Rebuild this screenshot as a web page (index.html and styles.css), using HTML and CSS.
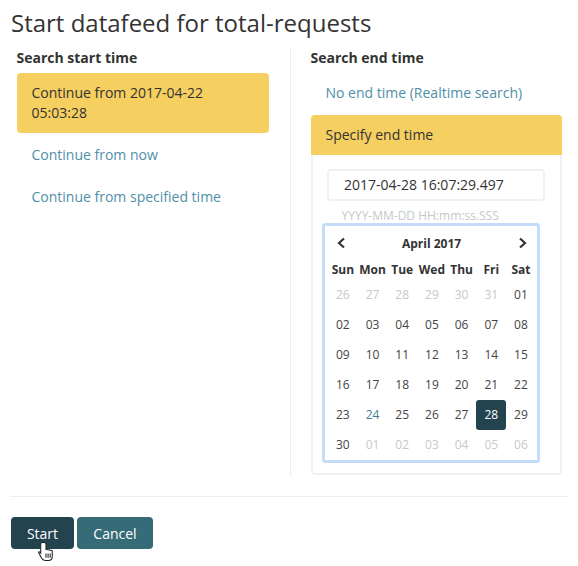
FILE: index.html
```html
<!DOCTYPE html>
<html lang="en">
<head>
  <meta charset="UTF-8">
  <title>Start datafeed</title>
  <link rel="stylesheet" href="styles.css">
</head>
<body>
  <h1>Start datafeed for total-requests</h1>
  <div class="columns">
    <div class="col col-start">
      <h2>Search start time</h2>
      <div class="option selected">Continue from 2017-04-22 05:03:28</div>
      <a class="option">Continue from now</a>
      <a class="option">Continue from specified time</a>
    </div>
    <div class="col col-end">
      <h2>Search end time</h2>
      <a class="option">No end time (Realtime search)</a>
      <div class="panel">
        <div class="panel-head">Specify end time</div>
        <div class="panel-body">
          <div class="time-input">2017-04-28 16:07:29.497</div>
          <div class="format">YYYY-MM-DD HH:mm:ss.SSS</div>
          <div class="calendar">
            <div class="cal-head">
              <svg class="chev" width="10" height="12" viewBox="0 0 10 12"><path d="M8 1.500 3 6l5 4.500" /></svg>
              <span>April 2017</span>
              <svg class="chev" width="10" height="12" viewBox="0 0 10 12"><path d="M2 1.500 7 6l-5 4.500" /></svg>
            </div>
            <div class="cal-grid">
              <div class="dow">Sun</div><div class="dow">Mon</div><div class="dow">Tue</div><div class="dow">Wed</div><div class="dow">Thu</div><div class="dow">Fri</div><div class="dow">Sat</div>
              <div class="day muted">26</div><div class="day muted">27</div><div class="day muted">28</div><div class="day muted">29</div><div class="day muted">30</div><div class="day muted">31</div><div class="day">01</div>
              <div class="day">02</div><div class="day">03</div><div class="day">04</div><div class="day">05</div><div class="day">06</div><div class="day">07</div><div class="day">08</div>
              <div class="day">09</div><div class="day">10</div><div class="day">11</div><div class="day">12</div><div class="day">13</div><div class="day">14</div><div class="day">15</div>
              <div class="day">16</div><div class="day">17</div><div class="day">18</div><div class="day">19</div><div class="day">20</div><div class="day">21</div><div class="day">22</div>
              <div class="day">23</div><div class="day today">24</div><div class="day">25</div><div class="day">26</div><div class="day">27</div><div class="day active">28</div><div class="day">29</div>
              <div class="day">30</div><div class="day muted">01</div><div class="day muted">02</div><div class="day muted">03</div><div class="day muted">04</div><div class="day muted">05</div><div class="day muted">06</div>
            </div>
          </div>
        </div>
      </div>
    </div>
  </div>
  <div class="footer">
    <button class="btn btn-start">Start</button>
    <button class="btn btn-cancel">Cancel</button>
    <svg class="cursor" width="17" height="21" viewBox="0 0 16 20"><path d="M4 1.500c-.9 0-1.500.6-1.500 1.500v8.500L1.800 10.600C1 9.800.3 10.200.6 11.300l2.600 5c.8 1.500 1.800 2.200 3.600 2.200h3.200c2.200 0 3.500-1.500 3.500-3.700V10c0-1.500-1.700-1.600-2-.6 0-1.300-1.700-1.500-2-.5 0-1.300-1.700-1.400-2-.4V3c0-.9-.6-1.500-1.500-1.500Z" fill="#fff" stroke="#222" stroke-width="1"/><path d="M7.500 12v4M9.500 12v4M11.500 12v4" stroke="#222" stroke-width="1"/></svg>
  </div>
</body>
</html>
```

FILE: styles.css
```css
* {
  box-sizing: border-box;
}

body {
  font-family: "Open Sans", sans-serif;
  color: #333;
  background: #fff;
  margin: 0;
  padding: 0 10px;
  min-height: 566px;
}

h1 {
  font-size: 24px;
  font-weight: 400;
  line-height: 33px;
  margin: 6px 0 0 1px;
}

.columns {
  display: flex;
  margin-top: 9px;
}

.col {
  width: 281px;
  padding: 0 6.500px;
}

.col-start {
  height: 428px;
  border-right: 1px solid #eceff1;
}

.col-end {
  padding: 0 0 0 19.500px;
  width: 272px;
}

h2 {
  font-size: 14px;
  font-weight: 700;
  line-height: 20px;
  margin: 0 0 5px;
}

.option {
  display: block;
  color: #4f8fa8;
  font-size: 14px;
  line-height: 20px;
  padding: 10px 15px;
  margin-bottom: 2px;
}

.selected {
  background: #f5cf60;
  color: #333;
  border-radius: 4px;
  width: 252px;
}

.panel {
  margin-top: 2px;
  width: 251.500px;
  border: 2px solid #eff2f3;
  border-top: 0;
  border-radius: 4px;
}

.panel-head {
  background: #f5cf60;
  font-size: 14px;
  line-height: 20px;
  padding: 10px 15px;
  margin: 0 -2px;
  border-radius: 4px 4px 0 0;
}

.panel-body {
  padding: 14px 9px 10px;
}

.time-input {
  width: 218px;
  height: 32px;
  margin-left: 5.500px;
  border: 2px solid #eff2f3;
  border-radius: 4px;
  padding: 0 15px;
  font-size: 14px;
  line-height: 28px;
}

.format {
  font-size: 12px;
  line-height: 16px;
  color: #c4c9cc;
  margin: 7px 0 0 20px;
}

.calendar {
  width: 218px;
  height: 240px;
  margin-top: -1px;
  border: 3px solid #c6dcfb;
  border-radius: 3px;
  padding: 0 4px;
}

.cal-head {
  display: flex;
  justify-content: space-between;
  align-items: center;
  height: 34px;
  padding: 1px 5px 1px 7px;
  font-size: 12px;
  font-weight: 700;
}

.chev {
  fill: none;
  stroke: #333;
  stroke-width: 2.200;
}

.cal-grid {
  display: grid;
  grid-template-columns: repeat(7, 29.700px);
  margin-left: -0.500px;
}

.dow {
  font-size: 12px;
  font-weight: 700;
  line-height: 20px;
  text-align: center;
}

.day {
  height: 30px;
  font-size: 12px;
  line-height: 30px;
  text-align: center;
  color: #444;
  border-radius: 3px;
}

.muted {
  color: #c4c9cc;
}

.today {
  color: #3f7f92;
}

.active {
  background: #23444f;
  color: #fff;
}

.footer {
  position: relative;
  margin-top: 20px;
  padding: 20px 0 16px 1px;
  border-top: 1px solid #eceff1;
  display: flex;
  gap: 3px;
}

.btn {
  font-family: "Open Sans", sans-serif;
  font-size: 14px;
  color: #fff;
  height: 32px;
  border: 0;
  border-radius: 4px;
  padding: 0;
}

.btn-start {
  width: 63px;
  background: #23444f;
}

.btn-cancel {
  width: 76px;
  background: #366b78;
}

.cursor {
  position: absolute;
  left: 28px;
  top: 44px;
}
```
